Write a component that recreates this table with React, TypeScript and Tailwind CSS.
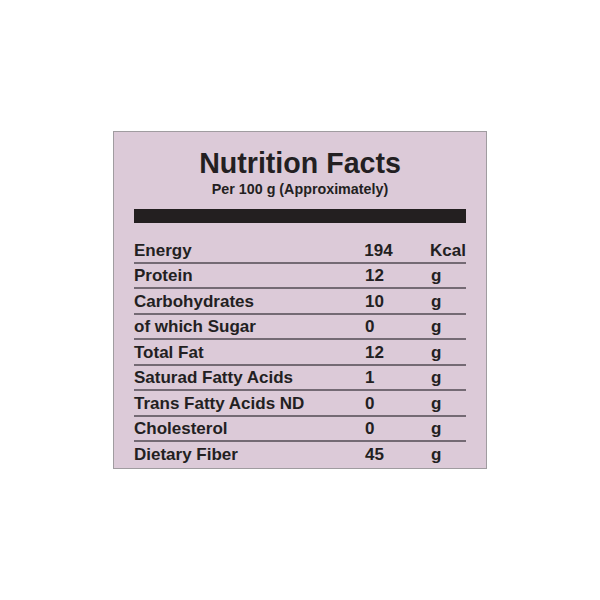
const rows = [
  { name: 'Energy', value: '194', unit: 'Kcal' },
  { name: 'Protein', value: '12', unit: 'g' },
  { name: 'Carbohydrates', value: '10', unit: 'g' },
  { name: 'of which Sugar', value: '0', unit: 'g' },
  { name: 'Total Fat', value: '12', unit: 'g' },
  { name: 'Saturad Fatty Acids', value: '1', unit: 'g' },
  { name: 'Trans Fatty Acids ND', value: '0', unit: 'g' },
  { name: 'Cholesterol', value: '0', unit: 'g' },
  { name: 'Dietary Fiber', value: '45', unit: 'g' },
];

export default function App() {
  return (
    <main className="w-[600px] h-[600px] bg-white pt-[131px] pl-[113px] font-['Liberation_Sans',Arial,sans-serif]">
      {/* Label */}
      <div className="w-[374px] h-[338px] bg-[#dccad8] border border-[#a09ca0] px-[20px] pt-[17px] text-[#231f22]">
        <div className="text-center">
          <h1 className="text-[28.6px] font-bold leading-none">Nutrition Facts</h1>
          <p className="mt-[4.5px] text-[14.3px] font-bold leading-none">Per 100 g (Approximately)</p>
        </div>

        <div className="mt-[13px] h-[14px] bg-[#231f20]" />

        <div className="mt-[15px]">
          {rows.map((r, i) => (
            <div
              key={r.name}
              className={`flex h-[25.5px] pt-[2.5px] text-[17px] font-bold leading-[20px] ${
                i < rows.length - 1 ? 'border-b-2 border-[#746a74]' : ''
              }`}
            >
              <span className="w-[231px]">{r.name}</span>
              <span className="w-[66px]">{r.value}</span>
              <span>{r.unit}</span>
            </div>
          ))}
        </div>
      </div>
    </main>
  );
}
